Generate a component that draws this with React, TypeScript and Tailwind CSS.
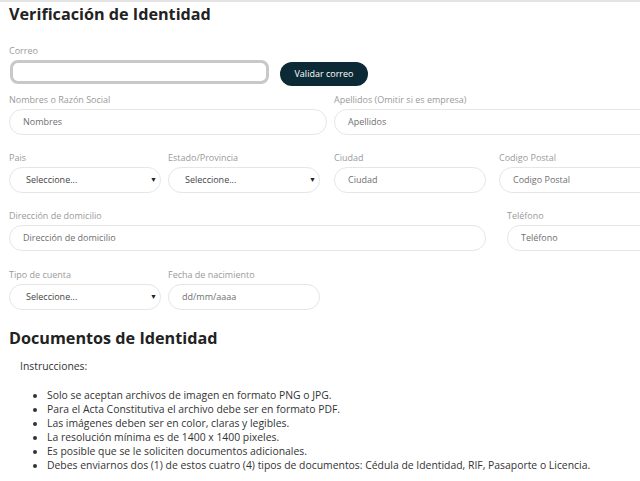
import React from "react";

function Label({ children }: { children: React.ReactNode }) {
  return <div className="text-[9px] leading-[14px] text-[#9a9a9a] h-[14px] mb-[2px] whitespace-nowrap">{children}</div>;
}

function TextBox({ w, text }: { w: string; text: string }) {
  return (
    <div className={`${w} h-[26px] shrink-0 rounded-full border border-[#e6e6e6] flex items-center pl-[13px] text-[9px] text-[#6f6f6f] whitespace-nowrap`}>
      {text}
    </div>
  );
}

function SelectBox({ w }: { w: string }) {
  return (
    <div className={`${w} h-[26px] shrink-0 rounded-full border border-[#e6e6e6] flex items-center justify-between pl-[16px] pr-[3px] text-[9px] text-[#444]`}>
      <span>Seleccione...</span>
      <span className="text-[7px] text-[#222]">▼</span>
    </div>
  );
}

export default function App() {
  const rules = [
    "Solo se aceptan archivos de imagen en formato PNG o JPG.",
    "Para el Acta Constitutiva el archivo debe ser en formato PDF.",
    "Las imágenes deben ser en color, claras y legibles.",
    "La resolución mínima es de 1400 x 1400 pixeles.",
    "Es posible que se le soliciten documentos adicionales.",
    "Debes enviarnos dos (1) de estos cuatro (4) tipos de documentos: Cédula de Identidad, RIF, Pasaporte o Licencia.",
  ];

  return (
    <div className="w-[640px] h-[481px] overflow-hidden bg-white border-t-2 border-[#e4e4e4] font-['Open_Sans',sans-serif]">
      <div className="pl-[9px] w-[680px]">
        <h1 className="text-[16.2px] font-bold leading-[22px] text-[#222] pt-[1px]">Verificación de Identidad</h1>

        {/* correo */}
        <div className="mt-[19px]">
          <Label>Correo</Label>
          <div className="flex items-start">
            <div className="w-[259px] h-[24px] ml-[1px] rounded-[8px] border-[3px] border-[#c8c8c8]"></div>
            <button className="ml-[11px] mt-[2px] w-[88px] h-[24px] rounded-full bg-[#0c2a36] text-white text-[9px]">
              Validar correo
            </button>
          </div>
        </div>

        {/* nombres */}
        <div className="flex gap-[7px] mt-[7px]">
          <div>
            <Label>Nombres o Razón Social</Label>
            <TextBox w="w-[318px]" text="Nombres" />
          </div>
          <div>
            <Label>Apellidos (Omitir si es empresa)</Label>
            <TextBox w="w-[330px]" text="Apellidos" />
          </div>
        </div>

        {/* pais */}
        <div className="flex mt-[16px]">
          <div className="mr-[7px]">
            <Label>Pais</Label>
            <SelectBox w="w-[152px]" />
          </div>
          <div className="mr-[14px]">
            <Label>Estado/Provincia</Label>
            <SelectBox w="w-[152px]" />
          </div>
          <div className="mr-[13px]">
            <Label>Ciudad</Label>
            <TextBox w="w-[152px]" text="Ciudad" />
          </div>
          <div>
            <Label>Codigo Postal</Label>
            <TextBox w="w-[160px]" text="Codigo Postal" />
          </div>
        </div>

        {/* direccion */}
        <div className="flex mt-[16px]">
          <div className="mr-[21px]">
            <Label>Dirección de domicilio</Label>
            <TextBox w="w-[477px]" text="Dirección de domicilio" />
          </div>
          <div>
            <Label>Teléfono</Label>
            <TextBox w="w-[150px]" text="Teléfono" />
          </div>
        </div>

        {/* tipo */}
        <div className="flex mt-[17px]">
          <div className="mr-[7px]">
            <Label>Tipo de cuenta</Label>
            <SelectBox w="w-[152px]" />
          </div>
          <div>
            <Label>Fecha de nacimiento</Label>
            <TextBox w="w-[152px]" text="dd/mm/aaaa" />
          </div>
        </div>

        <h2 className="text-[16.2px] font-bold leading-[22px] text-[#222] mt-[17px]">Documentos de Identidad</h2>

        <div className="pl-[11px] mt-[10px] text-[10.4px] leading-[14px] text-[#333]">
          <p>Instrucciones:</p>
          <ul className="list-disc pl-[27px] mt-[15px]">
            {rules.map((r, i) => (
              <li key={i}>{r}</li>
            ))}
          </ul>
        </div>
      </div>
    </div>
  );
}
